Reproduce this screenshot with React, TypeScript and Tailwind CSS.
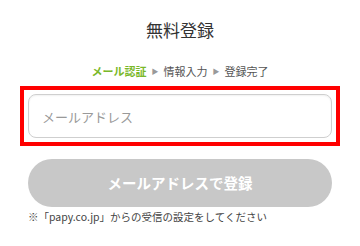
import React from "react";

const FONT = { fontFamily: '"Noto Sans CJK JP", "Noto Sans", sans-serif' };

export default function App() {
  return (
    <div className="w-[360px] h-[246px] bg-white text-[#333]" style={FONT}>
      {/* Title */}
      <h1 className="pt-[19px] text-center text-[17px] leading-[22px] font-normal">無料登録</h1>

      {/* Steps */}
      <div className="mt-[22px] flex items-center justify-center gap-[5px] text-[11px] leading-[16px]">
        <span className="font-bold text-[#7ab829]">メール認証</span>
        <span className="text-[7px] text-[#999]">▶</span>
        <span className="text-[#555]">情報入力</span>
        <span className="text-[7px] text-[#999]">▶</span>
        <span className="text-[#555]">登録完了</span>
      </div>

      {/* Email field (highlighted) */}
      <div className="mx-[20px] mt-[7px] border-4 border-[#ff0000] p-[4px]">
        <input
          type="email"
          placeholder="メールアドレス"
          className="block w-full h-[44px] rounded-lg border border-[#cfcfcf] px-[13px] text-[13px] text-[#333] placeholder-[#999] outline-none shadow-[inset_0_1px_2px_rgba(0,0,0,0.06)]"
          style={FONT}
        />
      </div>

      {/* Submit */}
      <div className="px-[28px] mt-[13px]">
        <button
          type="button"
          className="w-full h-[48px] rounded-full bg-[#c8c8c8] text-white text-[14.5px] font-bold"
          style={FONT}
        >
          メールアドレスで登録
        </button>
        <p className="mt-[3px] text-[10.5px] leading-[14px] text-[#444]">※「papy.co.jp」からの受信の設定をしてください</p>
      </div>
    </div>
  );
}
